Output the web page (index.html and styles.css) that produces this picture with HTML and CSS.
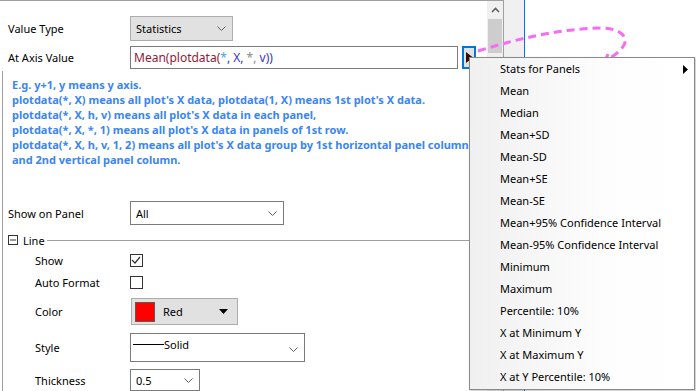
FILE: index.html
```html
<!DOCTYPE html>
<html lang="en">
<head>
  <meta charset="UTF-8" />
  <title>Plot Details</title>
  <link rel="stylesheet" href="styles.css">
</head>
<body>
  <div class="screen">
    <div class="panel">
      <div class="content">
        <div class="row first">
          <div class="label">Value Type</div>
          <div class="combo gray w-type"><span>Statistics</span><svg class="chev" width="9" height="5" viewBox="0 0 9 5"><polyline points="0.5,0.5 4.5,4.5 8.5,0.5"/></svg></div>
        </div>
        <div class="row axis">
          <div class="label">At Axis Value</div>
          <div class="textbox"><span class="fn">Mean(plotdata(</span><span class="c1">*</span><span class="c2">, X, </span><span class="c3">*, </span><span class="c2">v))</span></div>
          <div class="arrow-btn"><svg width="7" height="11" viewBox="0 0 7 11"><polygon points="0,0 7,5.5 0,11"/></svg></div>
        </div>

        <div class="lower">
          <div class="notes">
            E.g. y+1, y means y axis.<br>
            plotdata(*, X) means all plot's X data, plotdata(1, X) means 1st plot's X data.<br>
            plotdata(*, X, h, v) means all plot's X data in each panel,<br>
            plotdata(*, X, *, 1) means all plot's X data in panels of 1st row.<br>
            plotdata(*, X, h, v, 1, 2) means all plot's X data group by 1st horizontal panel column<br>
            and 2nd vertical panel column.
          </div>

          <div class="row panel-row">
            <div class="label">Show on Panel</div>
            <div class="combo w-panel"><span>All</span><svg class="chev" width="9" height="5" viewBox="0 0 9 5"><polyline points="0.5,0.5 4.5,4.5 8.5,0.5"/></svg></div>
          </div>

          <div class="group">
            <svg class="toggle" width="10" height="10" viewBox="0 0 10 10"><rect x="0.5" y="0.5" width="9" height="9"/><line x1="2" y1="5" x2="8" y2="5"/></svg>
            <span>Line</span>
            <div class="rule"></div>
          </div>

          <div class="row sub r-show">
            <div class="label">Show</div>
            <div class="check"><svg width="12" height="12" viewBox="0 0 12 12"><polyline points="2,6 5,9 10,3"/></svg></div>
          </div>
          <div class="row sub r-auto">
            <div class="label">Auto Format</div>
            <div class="check"></div>
          </div>
          <div class="row sub r-color">
            <div class="label">Color</div>
            <div class="color-btn">
              <div class="swatch"></div>
              <span>Red</span>
              <svg class="tri" width="9" height="5" viewBox="0 0 9 5"><polygon points="0,0 9,0 4.5,5"/></svg>
            </div>
          </div>
          <div class="row sub r-style">
            <div class="label">Style</div>
            <div class="combo tall w-style">
              <span class="line-sample"></span><span class="solid">Solid</span>
              <svg class="chev" width="9" height="5" viewBox="0 0 9 5"><polyline points="0.5,0.5 4.5,4.5 8.5,0.5"/></svg>
            </div>
          </div>
          <div class="row sub r-thick">
            <div class="label">Thickness</div>
            <div class="combo w-thick"><span>0.5</span><svg class="chev" width="9" height="5" viewBox="0 0 9 5"><polyline points="0.5,0.5 4.5,4.5 8.5,0.5"/></svg></div>
          </div>
        </div>
      </div>
      <div class="scrollbar">
        <div class="sb-up"><svg width="9" height="6" viewBox="0 0 9 6"><polyline points="1,5 4.5,1.5 8,5"/></svg></div>
        <div class="sb-thumb"></div>
      </div>
    </div>
    <div class="gap-strip"></div>
    <div class="outside"></div>
  </div>

  <!-- pointer drawn over the screenshot -->
  <svg class="pointer" width="696" height="100" viewBox="0 0 696 100">
    <path d="M478 51 C 520 38, 560 29, 600 28 C 622 28, 628 38, 624 45 C 620 52, 612 57, 606 60"/>
    <polyline class="head" points="608,54 605,61 613,60"/>
  </svg>

  <div class="menu">
    <div class="item">Stats for Panels<svg class="sub-arrow" width="5" height="9" viewBox="0 0 5 9"><polygon points="0,0 5,4.5 0,9"/></svg></div>
    <div class="item">Mean</div>
    <div class="item">Median</div>
    <div class="item">Mean+SD</div>
    <div class="item">Mean-SD</div>
    <div class="item">Mean+SE</div>
    <div class="item">Mean-SE</div>
    <div class="item">Mean+95% Confidence Interval</div>
    <div class="item">Mean-95% Confidence Interval</div>
    <div class="item">Minimum</div>
    <div class="item">Maximum</div>
    <div class="item">Percentile: 10%</div>
    <div class="item">X at Minimum Y</div>
    <div class="item">X at Maximum Y</div>
    <div class="item">X at Y Percentile: 10%</div>
  </div>
</body>
</html>
```

FILE: styles.css
```css
body {
  margin: 0;
  font-family: 'Noto Sans', sans-serif;
  font-size: 11px;
  color: #000;
  background: #fff;
  width: 696px;
  height: 391px;
  overflow: hidden;
  position: relative;
}

.screen {
  display: flex;
  height: 391px;
  overflow: hidden;
}

.panel {
  width: 504px;
  display: flex;
  border-top: 1px solid #a0a0a0;
  border-right: 1px solid #a0a0a0;
  box-sizing: border-box;
  background: #fff;
}

.content {
  flex: 1;
  display: flex;
  flex-direction: column;
  overflow: hidden;
}

.gap-strip {
  width: 20px;
  background: #f0f0f0;
  border-right: 1px solid #0078d7;
}

.outside {
  flex: 1;
  background: #fff;
}

/* scrollbar */
.scrollbar {
  width: 16px;
  background: #f0f0f0;
}

.sb-up {
  height: 18px;
  display: flex;
  align-items: center;
  justify-content: center;
}

.sb-up polyline {
  fill: none;
  stroke: #606060;
  stroke-width: 1.6;
}

.sb-thumb {
  margin: 0 1px;
  height: 34px;
  background: #cdcdcd;
}

/* rows */
.row {
  display: flex;
  align-items: center;
  flex-shrink: 0;
}

.label {
  width: 122px;
  padding-left: 8px;
  flex-shrink: 0;
}

.row.first {
  margin-top: 15px;
  height: 25px;
}

.row.axis {
  margin-top: 5px;
  height: 23px;
}

.combo {
  display: flex;
  align-items: center;
  justify-content: space-between;
  box-sizing: border-box;
  border: 1px solid #7a7a7a;
  background: #fff;
  padding: 0 6px 0 5px;
  height: 100%;
}

.combo.gray {
  background: #e1e1e1;
  border-color: #adadad;
}

.chev {
  flex-shrink: 0;
}

.chev polyline {
  fill: none;
  stroke: #606060;
  stroke-width: 1;
}

.w-type { width: 103px; }
.w-panel { width: 154px; }
.w-style { width: 175px; }
.w-thick { width: 70px; }

.textbox {
  width: 328px;
  height: 100%;
  box-sizing: border-box;
  border: 1px solid #7a7a7a;
  padding: 0 3px;
  display: flex;
  align-items: center;
  font-size: 12px;
  white-space: pre;
}

.fn { color: #93183a; }
.c1 { color: #4aa3e0; }
.c2 { color: #3434c8; }
.c3 { color: #8a8a8a; }

.arrow-btn {
  margin-left: 4px;
  width: 14px;
  height: 23px;
  box-sizing: border-box;
  border: 2px solid #0078d7;
  display: flex;
  align-items: center;
  justify-content: center;
  background: #e1e1e1;
}

.arrow-btn polygon {
  fill: #3a0a0a;
}

/* lower area with left frame */
.lower {
  flex: 1;
  margin-left: 2px;
  border-left: 1px solid #a0a0a0;
  margin-top: 2px;
  padding-top: 6px;
  overflow: hidden;
}

.lower .label {
  width: 122px;
  padding-left: 5px;
}

.notes {
  padding-left: 9px;
  color: #3a86f2;
  font-weight: bold;
  font-size: 11px;
  line-height: 15px;
  white-space: nowrap;
}

.row.panel-row {
  margin-top: 34px;
  height: 24px;
}

.group {
  display: flex;
  align-items: center;
  margin-top: 9px;
  height: 12px;
  padding-left: 5px;
}

.toggle rect {
  fill: #fff;
  stroke: #333;
}

.toggle line {
  stroke: #333;
}

.group span {
  margin-left: 5px;
}

.rule {
  flex: 1;
  height: 1px;
  background: #a0a0a0;
  margin-left: 2px;
}

.row.sub .label {
  width: 95px;
  padding-left: 32px;
}

.r-show { margin-top: 8px; height: 12px; }
.r-auto { margin-top: 10px; height: 12px; }
.r-color { margin-top: 10px; height: 27px; }
.r-style { margin-top: 8px; height: 29px; }
.r-thick { margin-top: 7px; height: 22px; }

.check {
  width: 13px;
  height: 13px;
  box-sizing: border-box;
  border: 1px solid #333;
  background: #fff;
}

.check svg {
  display: block;
  margin: -1px 0 0 -1px;
}

.check polyline {
  fill: none;
  stroke: #333;
  stroke-width: 1.2;
}

.color-btn {
  width: 107px;
  height: 100%;
  box-sizing: border-box;
  border: 1px solid #adadad;
  background: #e1e1e1;
  display: flex;
  align-items: center;
  padding: 0 9px 0 3px;
  margin-left: 1px;
}

.swatch {
  width: 20px;
  height: 20px;
  box-sizing: border-box;
  background: #ff0000;
  border: 1px solid #5a5a5a;
}

.color-btn span {
  margin-left: 8px;
  flex: 1;
}

.tri polygon {
  fill: #000;
}

.combo.tall {
  align-items: flex-start;
  padding-left: 2px;
}

.combo.tall .chev {
  margin-top: 13px;
  margin-left: auto;
}

.line-sample {
  width: 31px;
  height: 1px;
  background: #000;
  margin-top: 10px;
}

.solid {
  margin-top: 3px;
}

/* pointer */
.pointer {
  position: absolute;
  left: 0;
  top: 0;
  pointer-events: none;
}

.pointer path,
.pointer polyline {
  fill: none;
  stroke: #f66cf2;
  stroke-width: 3;
}

.pointer path {
  stroke-dasharray: 8 5;
}

/* popup menu */
.menu {
  position: absolute;
  left: 469px;
  top: 57px;
  width: 226px;
  height: 333px;
  box-sizing: border-box;
  border: 1px solid #8a8a8a;
  background: linear-gradient(to right, #f0f0f0, #fdfdfd 60%, #fff);
  box-shadow: 1px 1px 2px rgba(0, 0, 0, 0.25);
}

.menu .item {
  height: 22px;
  line-height: 22px;
  padding-left: 30px;
  position: relative;
}

.sub-arrow {
  position: absolute;
  right: 6px;
  top: 7px;
}
```
